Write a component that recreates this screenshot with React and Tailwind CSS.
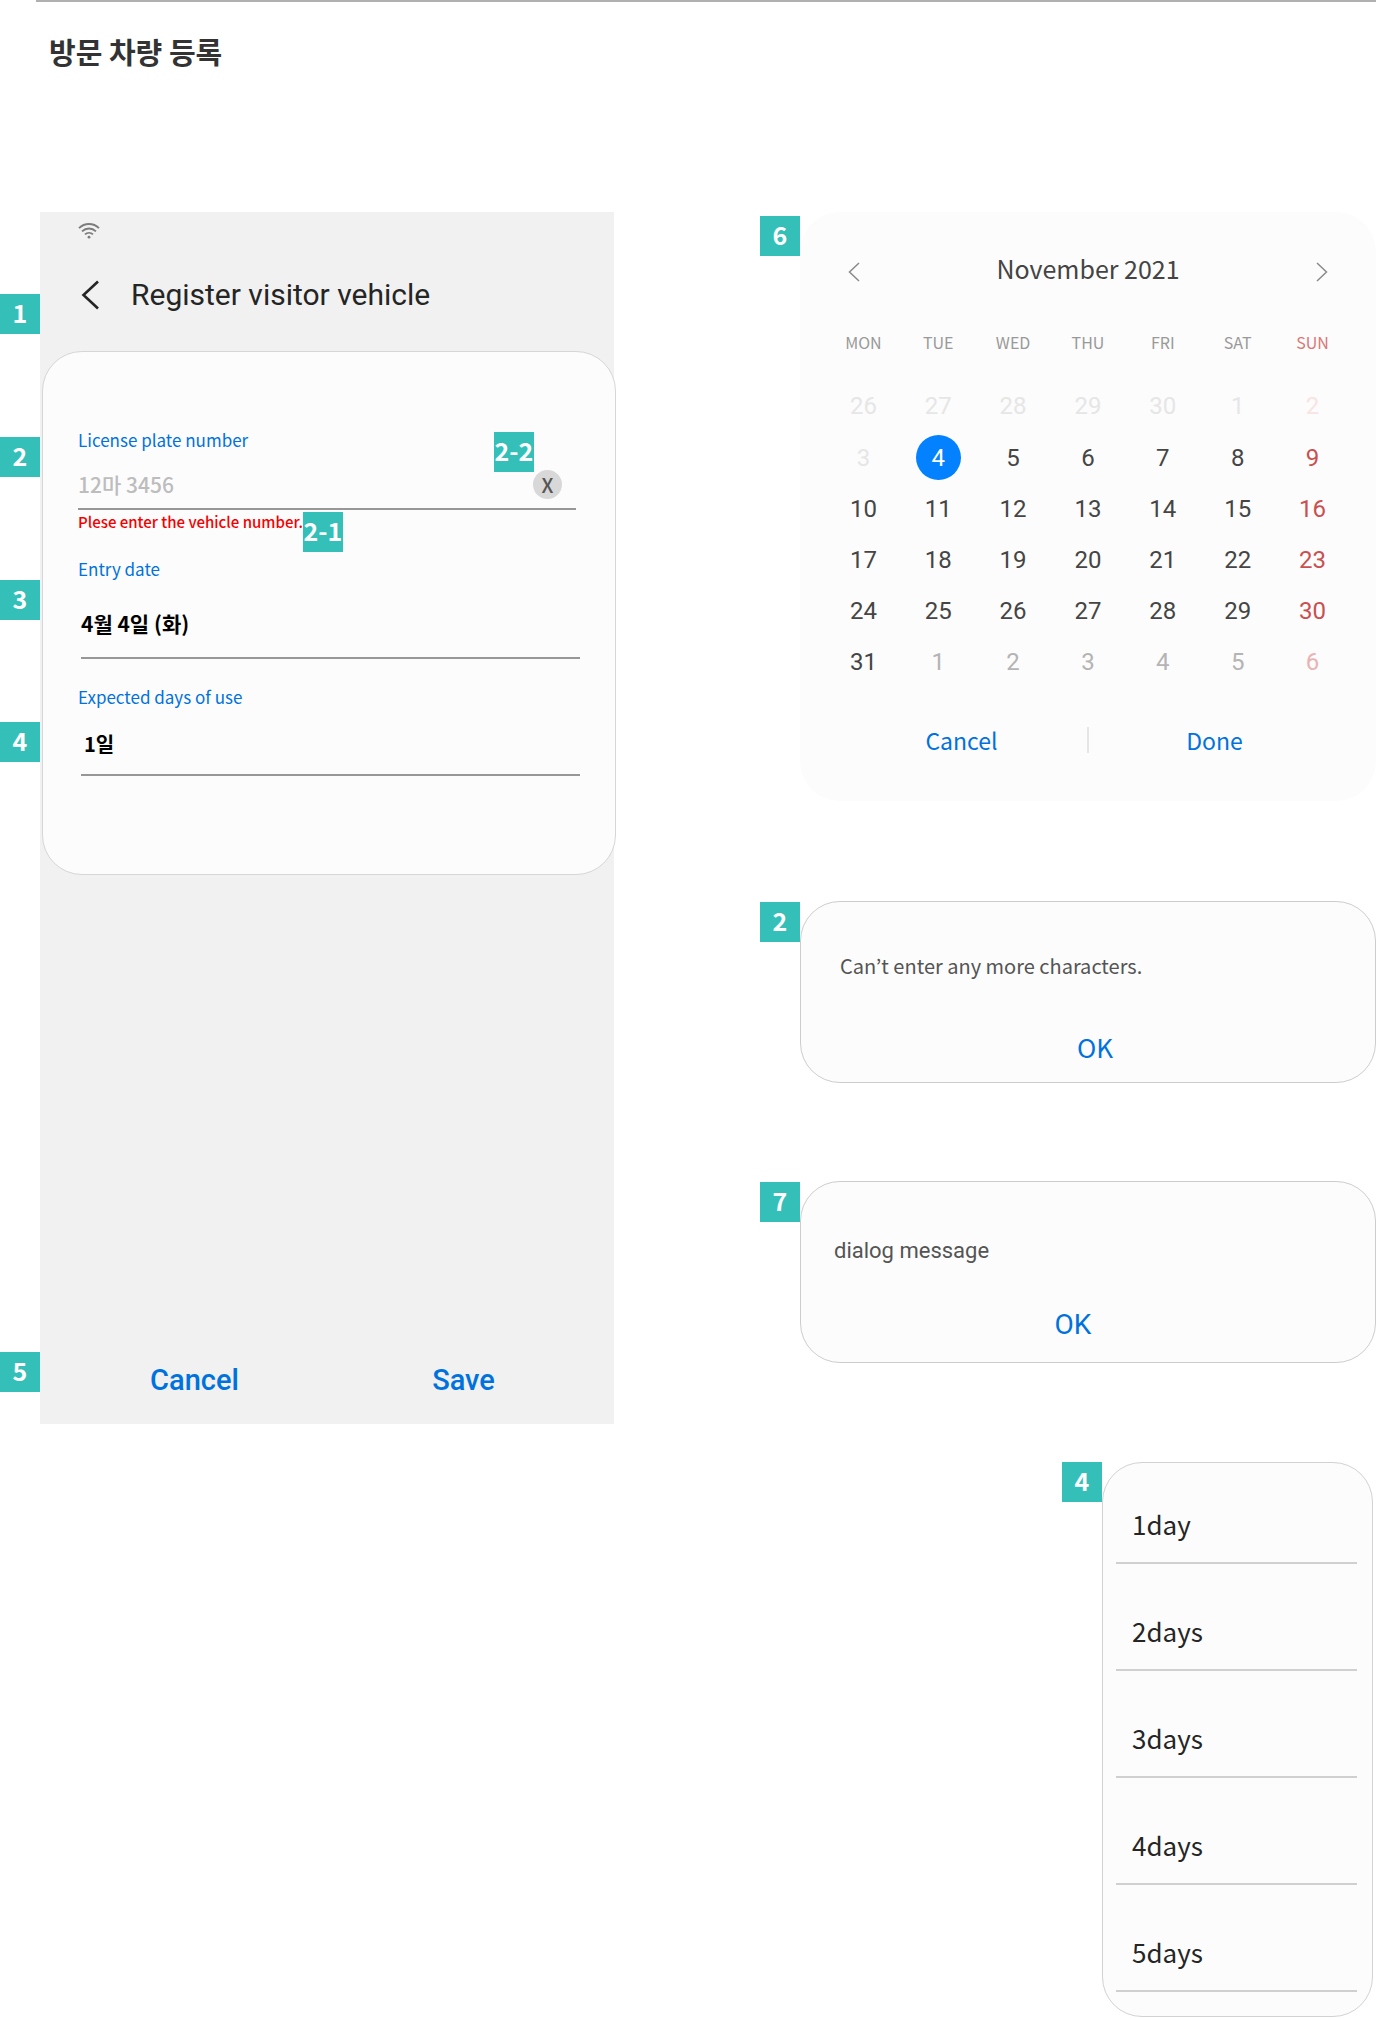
const gothic = "font-['Noto_Sans_CJK_KR',sans-serif]";

function Badge({ children, className = "" }) {
  return (
    <span
      className={`absolute z-10 flex h-10 w-10 items-center justify-center bg-[#34c0b8] pb-1 text-[25px] leading-9 font-bold whitespace-nowrap text-white ${className}`}
    >
      {children}
    </span>
  );
}

function Chevron({ direction, className }) {
  return (
    <svg viewBox="0 0 12 20" fill="none" stroke="currentColor" className={className} aria-hidden="true">
      <path d={direction === "left" ? "M11 1 1.5 10 11 19" : "M1 1 10.5 10 1 19"} />
    </svg>
  );
}

function WifiIcon() {
  return (
    <svg width="22" height="16" viewBox="0 0 22 16" fill="none" stroke="#7c7c7c" strokeWidth="1.8" aria-hidden="true">
      <path d="M1 5.2C6.6-.4 15.4-.4 21 5.2" />
      <path d="M4 8.4C8 4.5 14 4.5 18 8.4" />
      <path d="M7 11.4C9.3 9.3 12.7 9.3 15 11.4" />
      <circle cx="11" cy="14.2" r="1.4" fill="#7c7c7c" stroke="none" />
    </svg>
  );
}

function PhoneScreen() {
  return (
    <section className="relative ml-10 bg-[#f1f1f1] pb-[15px]">
      <div className="flex h-[38px] items-center pl-[38px]">
        <WifiIcon />
      </div>
      <header className="relative flex h-[90px] items-center pl-[41px]">
        <Badge className="top-11 -left-10">1</Badge>
        <button type="button" aria-label="Back" className="text-[#252525]">
          <svg width="20" height="30" viewBox="0 0 20 30" fill="none" stroke="currentColor" strokeWidth="2.6" aria-hidden="true">
            <path d="M17 1.5 2.5 15 17 28.5" />
          </svg>
        </button>
        <h2 className="ml-[30px] font-['Roboto',sans-serif] text-[30px] leading-10 text-[#252525]">Register visitor vehicle</h2>
      </header>

      <form className="-mr-[2px] mt-[11px] ml-[2px] rounded-[40px] border border-[#d6d6d6] bg-[#fcfcfc] pt-[76px] pb-[98px]">
        <div className="relative pr-[39px] pl-[35px]">
          <Badge className="top-[9px] -left-[43px]">2</Badge>
          <label htmlFor="plate" className="block text-[17px] leading-6 text-[#0072de]">License plate number</label>
          <input
            id="plate"
            placeholder="12마 3456"
            className="block h-[58px] w-full border-b-2 border-[#979797] bg-transparent pt-2 text-[21px] font-medium outline-none placeholder:text-[#bdbdbd]"
          />
          <Badge className="top-1 right-[81px]">2-2</Badge>
          <button
            type="button"
            aria-label="Clear"
            className="absolute top-[42px] right-[53px] flex h-[29px] w-[29px] items-center justify-center rounded-full bg-[#d8d8d8] text-[20px] leading-7 font-medium text-[#555]"
          >
            X
          </button>
          <p className="relative w-fit text-[15px] leading-6 font-medium text-[#f50000]">
            Plese enter the vehicle number.
            <Badge className="top-[2px] left-full">2-1</Badge>
          </p>
        </div>
        <div className="relative mt-[23px] pr-[35px] pl-[35px]">
          <Badge className="top-[23px] -left-[43px]">3</Badge>
          <label htmlFor="entry" className="block text-[17px] leading-6 text-[#0072de]">Entry date</label>
          <input
            id="entry"
            defaultValue="4월 4일 (화)"
            className="ml-[3px] block h-[78px] w-[calc(100%-3px)] border-b-2 border-[#979797] bg-transparent pt-2 text-[21px] font-bold text-black outline-none"
          />
        </div>
        <div className="relative mt-[26px] pr-[35px] pl-[35px]">
          <Badge className="top-[37px] -left-[43px]">4</Badge>
          <label htmlFor="days" className="block text-[17px] leading-6 text-[#0072de]">Expected days of use</label>
          <select
            id="days"
            className="ml-[3px] block h-[67px] w-[calc(100%-3px)] appearance-none border-b-2 border-[#979797] bg-transparent pt-1 pl-[3px] text-[20px] font-bold text-black outline-none"
          >
            <option>1일</option>
          </select>
        </div>
      </form>

      <footer className="relative mt-[477px] grid grid-cols-2 pr-4 pl-5 font-['Roboto',sans-serif] text-[29px] font-medium text-[#0072de]">
        <Badge className="top-0 -left-10 font-['Noto_Sans_CJK_KR',sans-serif]">5</Badge>
        <button type="button" className="h-[57px] pt-px">Cancel</button>
        <button type="button" className="h-[57px] pt-px">Save</button>
      </footer>
    </section>
  );
}

const weekdays = ["MON", "TUE", "WED", "THU", "FRI", "SAT", "SUN"];
const weeks = [
  [26, 27, 28, 29, 30, 1, 2],
  [3, 4, 5, 6, 7, 8, 9],
  [10, 11, 12, 13, 14, 15, 16],
  [17, 18, 19, 20, 21, 22, 23],
  [24, 25, 26, 27, 28, 29, 30],
  [31, 1, 2, 3, 4, 5, 6],
];

function dayStyle(week, day) {
  const sunday = day === 6;
  if (week === 1 && day === 1) return "bg-[#0381fe] text-white";
  if (week === 0 || (week === 1 && day === 0)) return sunday ? "text-[#f8e4e4]" : "text-[#e6e6e6]";
  if (week === 5 && day > 0) return sunday ? "text-[#e9b3b3]" : "text-[#b4b4b4]";
  return sunday ? "text-[#c9504f]" : "text-[#454545]";
}

function Calendar() {
  return (
    <section className="relative ml-10 rounded-[40px] bg-[#fcfcfc] pt-10 pb-[43px]">
      <Badge className="top-1 -left-10">6</Badge>
      <header className="flex h-9 items-center justify-between px-12 text-[#8a8a8a]">
        <button type="button" aria-label="Previous month" className="pt-1">
          <Chevron direction="left" className="h-5 w-3 stroke-[1.5]" />
        </button>
        <h2 className="pb-1 text-[25px] leading-8 text-[#444]">November 2021</h2>
        <button type="button" aria-label="Next month" className="pt-1">
          <Chevron direction="right" className="h-5 w-3 stroke-[1.5]" />
        </button>
      </header>
      <div className="mt-9 px-[26px]">
        <table className="w-full table-fixed text-center">
          <thead>
            <tr className="h-14 align-top text-[16px] leading-9 text-[#999]">
              {weekdays.map((name) => (
                <th key={name} className={name === "SUN" ? "p-0 font-normal text-[#d97777]" : "p-0 font-normal"}>{name}</th>
              ))}
            </tr>
          </thead>
          <tbody className="font-['Roboto',sans-serif] text-[24px]">
            {weeks.map((days, week) => (
              <tr key={week} className="h-[51px] first:h-[52px]">
                {days.map((number, day) => (
                  <td key={day} className="p-0">
                    <button type="button" className={`mx-auto flex h-[45px] w-[45px] items-center justify-center rounded-full ${dayStyle(week, day)}`}>
                      {number}
                    </button>
                  </td>
                ))}
              </tr>
            ))}
          </tbody>
        </table>
      </div>
      <footer className="mt-[35px] grid grid-cols-[1fr_2px_1fr] items-center px-9 text-[23px] leading-9 text-[#0072de]">
        <button type="button">Cancel</button>
        <span className="h-[26px] bg-[#e6e6e6]" />
        <button type="button">Done</button>
      </footer>
    </section>
  );
}

function Dialog({ badge, message, messageClass, okClass }) {
  return (
    <section className="relative ml-10 flex h-[182px] flex-col items-center rounded-[40px] border border-[#cdcdcd] bg-[#fcfcfc]">
      <Badge className="top-0 -left-[41px]">{badge}</Badge>
      <p className={`self-stretch leading-8 text-[#545454] ${messageClass}`}>{message}</p>
      <button type="button" className={`leading-10 text-[#0072de] ${okClass}`}>OK</button>
    </section>
  );
}

const dayOptions = ["1day", "2days", "3days", "4days", "5days"];

function DayList() {
  return (
    <section className="relative mt-px mr-[3px] ml-auto w-[271px] rounded-[40px] border border-[#d2d2d2] bg-[#fcfcfc] pr-[15px] pb-6 pl-[13px]">
      <Badge className="-top-px -left-[41px]">4</Badge>
      <ul>
        {dayOptions.map((option) => (
          <li key={option} className="flex h-[107px] items-end border-b-2 border-[#d0d0d0] first:h-[101px]">
            <button type="button" className="mb-[18px] w-full pl-4 text-left text-[26px] leading-10 text-[#252525]">{option}</button>
          </li>
        ))}
      </ul>
    </section>
  );
}

export default function App() {
  return (
    <main className={`min-h-screen bg-white ${gothic}`}>
      <header className="ml-9 h-[212px] border-t-2 border-[#b0b0b0] pt-[27px] pl-[13px]">
        <h1 className="text-[29px] leading-[44px] font-bold text-[#333]">방문 차량 등록</h1>
      </header>
      <div className="grid grid-cols-[614fr_616fr] items-start gap-x-[146px]">
        <PhoneScreen />
        <div className="flex flex-col">
          <Calendar />
          <div className="mt-[100px] flex flex-col gap-[98px]">
            <Dialog badge="2" message="Can’t enter any more characters." messageClass="mt-12 pl-[39px] text-[20px]" okClass="mt-[45px] ml-[14px] text-[26px]" />
            <Dialog
              badge="7"
              message="dialog message"
              messageClass="mt-[53px] pl-[33px] font-['Roboto',sans-serif] text-[22px]"
              okClass="mt-[38px] mr-[30px] font-['Roboto',sans-serif] text-[28px]"
            />
            <DayList />
          </div>
        </div>
      </div>
    </main>
  );
}
